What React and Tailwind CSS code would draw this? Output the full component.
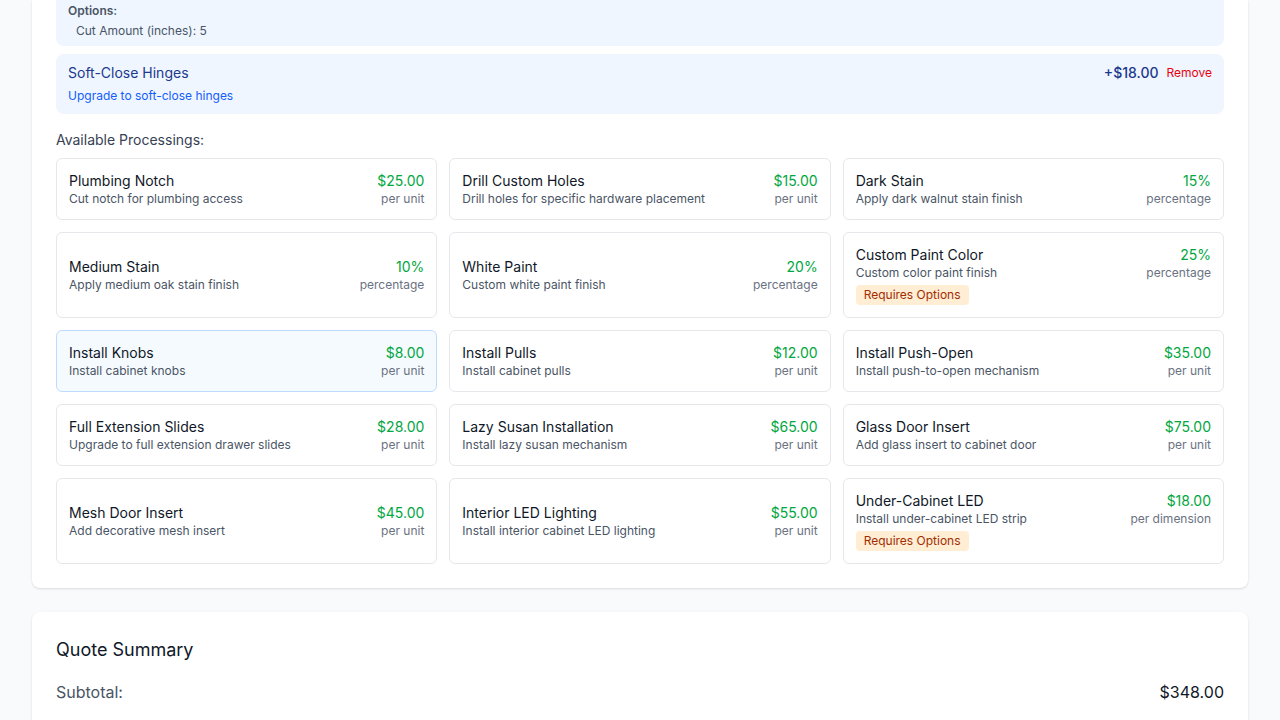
import React from "react";

const processings = [
    { name: "Plumbing Notch", desc: "Cut notch for plumbing access", price: "$25.00", unit: "per unit" },
    { name: "Drill Custom Holes", desc: "Drill holes for specific hardware placement", price: "$15.00", unit: "per unit" },
    { name: "Dark Stain", desc: "Apply dark walnut stain finish", price: "15%", unit: "percentage" },
    { name: "Medium Stain", desc: "Apply medium oak stain finish", price: "10%", unit: "percentage" },
    { name: "White Paint", desc: "Custom white paint finish", price: "20%", unit: "percentage" },
    { name: "Custom Paint Color", desc: "Custom color paint finish", price: "25%", unit: "percentage", options: true },
    { name: "Install Knobs", desc: "Install cabinet knobs", price: "$8.00", unit: "per unit", selected: true },
    { name: "Install Pulls", desc: "Install cabinet pulls", price: "$12.00", unit: "per unit" },
    { name: "Install Push-Open", desc: "Install push-to-open mechanism", price: "$35.00", unit: "per unit" },
    { name: "Full Extension Slides", desc: "Upgrade to full extension drawer slides", price: "$28.00", unit: "per unit" },
    { name: "Lazy Susan Installation", desc: "Install lazy susan mechanism", price: "$65.00", unit: "per unit" },
    { name: "Glass Door Insert", desc: "Add glass insert to cabinet door", price: "$75.00", unit: "per unit" },
    { name: "Mesh Door Insert", desc: "Add decorative mesh insert", price: "$45.00", unit: "per unit" },
    { name: "Interior LED Lighting", desc: "Install interior cabinet LED lighting", price: "$55.00", unit: "per unit" },
    { name: "Under-Cabinet LED", desc: "Install under-cabinet LED strip", price: "$18.00", unit: "per dimension", options: true },
];

function ProcessingCard({ item }) {
    return (
        <div
            className={
                item.selected
                    ? "flex flex-col justify-center rounded-md border border-blue-200 bg-blue-50/60 p-3"
                    : "flex flex-col justify-center rounded-md border border-gray-200 bg-white p-3"
            }
        >
            <div className="flex items-start justify-between gap-3">
                <div>
                    <div className="text-sm text-gray-900">{item.name}</div>
                    <div className="text-xs text-gray-600">{item.desc}</div>
                    {item.options && (
                        <span className="mt-1 inline-block rounded bg-orange-100 px-2 py-0.5 text-xs text-orange-800">
                            Requires Options
                        </span>
                    )}
                </div>
                <div className="text-right">
                    <div className="text-sm text-green-600">{item.price}</div>
                    <div className="text-xs text-gray-500">{item.unit}</div>
                </div>
            </div>
        </div>
    );
}

export default function App() {
    return (
        <div
            className="min-h-screen bg-gray-50 px-8"
            style={{ fontFamily: "Inter, 'Noto Sans', sans-serif" }}
        >
            {/* Processing card (scrolled, top cut off) */}
            <div className="rounded-b-lg bg-white px-6 pb-6 shadow">
                <div className="rounded-b-lg bg-blue-50 px-3 pt-[3px] pb-[7px]">
                    <div className="text-xs font-semibold text-gray-600">Options:</div>
                    <div className="mt-1 pl-2 text-xs text-gray-600">Cut Amount (inches): 5</div>
                </div>

                <div className="mt-2 rounded-lg bg-blue-50 px-3 pt-[9px] pb-2.5">
                    <div className="flex items-start justify-between">
                        <div>
                            <div className="text-sm text-blue-900">Soft-Close Hinges</div>
                            <div className="mt-[5px] text-xs text-blue-600">Upgrade to soft-close hinges</div>
                        </div>
                        <div className="flex items-center gap-2">
                            <span className="text-sm font-medium text-blue-900">+$18.00</span>
                            <button className="text-xs text-red-600">Remove</button>
                        </div>
                    </div>
                </div>

                <div className="mt-4 mb-2 text-sm text-gray-700">Available Processings:</div>

                <div className="grid grid-cols-3 gap-3">
                    {processings.map((item) => (
                        <ProcessingCard key={item.name} item={item} />
                    ))}
                </div>
            </div>

            {/* Quote summary */}
            <div className="mt-6 rounded-lg bg-white p-6 shadow">
                <h2 className="mb-4 text-lg text-gray-900">Quote Summary</h2>
                <div className="flex justify-between">
                    <span className="text-gray-600">Subtotal:</span>
                    <span className="text-gray-900">$348.00</span>
                </div>
                <div className="h-24" />
            </div>
        </div>
    );
}
